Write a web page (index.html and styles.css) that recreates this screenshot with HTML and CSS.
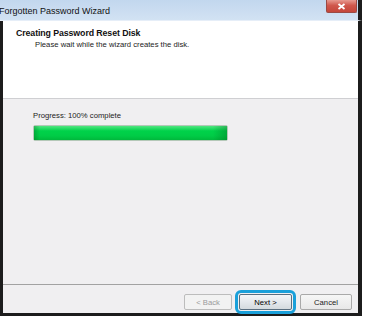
FILE: index.html
```html
<!DOCTYPE html>
<html>
<head>
<meta charset="utf-8">
<link rel="stylesheet" href="styles.css">
</head>
<body>
<div class="window">
  <div class="titlebar">
    <span class="title">Forgotten Password Wizard</span>
    <div class="close"><svg width="9" height="7" viewBox="0 0 9 7"><path d="M1.5 1 L7.5 6 M7.5 1 L1.5 6" stroke="#fff" stroke-width="1.8"/></svg></div>
  </div>
  <div class="frame">
    <div class="header">
      <div class="h-title">Creating Password Reset Disk</div>
      <div class="h-sub">Please wait while the wizard creates the disk.</div>
    </div>
    <div class="main">
      <div class="progress-label">Progress: 100% complete</div>
      <div class="bar"><div class="fill" style="width:100%"></div></div>
    </div>
    <div class="footer">
      <button class="btn disabled">&lt; Back</button>
      <button class="btn primary">Next &gt;</button>
      <button class="btn cancel">Cancel</button>
    </div>
  </div>
</div>
</body>
</html>
```
FILE: styles.css
```css
html, body {
  margin: 0;
  padding: 0;
  background: #ffffff;
}
body {
  width: 365px;
  height: 318px;
  overflow: hidden;
  font-family: "Liberation Sans", Arial, sans-serif;
}
.window {
  width: 362px;
  display: flex;
  flex-direction: column;
}
.titlebar {
  height: 21px;
  box-sizing: border-box;
  background: linear-gradient(#c2d7ee, #d2e2f3);
  border-right: 4px solid #1c1c1c;
  border-bottom: 1px solid #e6eef8;
  display: flex;
  align-items: center;
  position: relative;
}
.title {
  font-size: 9px;
  color: #111;
  margin-left: -1px;
  margin-top: 1px;
}
.close {
  position: absolute;
  right: 1px;
  top: 0;
  width: 31px;
  height: 13px;
  background: linear-gradient(#e79a90, #d0584c 45%, #c4463a);
  border: 1px solid #9a4a44;
  border-top: none;
  border-radius: 0 0 2px 2px;
  box-sizing: border-box;
  display: flex;
  align-items: center;
  justify-content: center;
}
.frame {
  height: 295px;
  box-sizing: border-box;
  border-left: 3px solid #1c1c1c;
  border-right: 4px solid #1c1c1c;
  border-bottom: 3px solid #1c1c1c;
  display: flex;
  flex-direction: column;
  background: #f0eff1;
}
.header {
  height: 78px;
  box-sizing: border-box;
  background: #ffffff;
  border-bottom: 1px solid #cfcfd2;
  padding: 7px 0 0 13px;
}
.h-title {
  font-size: 8.8px;
  font-weight: bold;
  color: #111;
  letter-spacing: -0.1px;
}
.h-sub {
  font-size: 7.7px;
  color: #222;
  margin: 2px 0 0 19px;
}
.main {
  flex: 1;
  padding: 12px 0 0 30px;
}
.progress-label {
  font-size: 7.7px;
  color: #222;
}
.bar {
  width: 195px;
  height: 16px;
  margin-top: 5px;
  box-sizing: border-box;
  border: 1px solid #b4c8b8;
  background: #e8e8e8;
  border-radius: 2px;
}
.fill {
  height: 100%;
  background:
    linear-gradient(to right, rgba(0,100,30,0.35), rgba(0,0,0,0) 6px, rgba(0,0,0,0) calc(100% - 14px), rgba(0,100,30,0.35)),
    linear-gradient(#50e680, #00d24a 35%, #00cc46 70%, #00b83c);
}
.footer {
  height: 29px;
  box-sizing: border-box;
  border-top: 1px solid #a2a2a2;
  display: flex;
  justify-content: flex-end;
  align-items: flex-start;
  padding: 9px 6px 0 0;
  gap: 6px;
}
.btn {
  width: 48px;
  height: 16px;
  box-sizing: border-box;
  border: 1px solid #a9a9a9;
  border-radius: 2px;
  background: linear-gradient(#f6f6f6, #e8e8e8);
  font-family: "Liberation Sans", Arial, sans-serif;
  font-size: 7.7px;
  color: #222;
  padding: 0;
  margin: 0;
}
.btn.disabled {
  color: #9a9a9a;
  background: #f2f2f2;
  border-color: #bcbcbc;
}
.btn.primary {
  width: 53px;
  color: #000;
  border-color: #5a6f80;
  background: linear-gradient(#f4f6f8, #e4e8ec 50%, #d4dade);
  outline: 3px solid #1aa0da;
  outline-offset: 1px;
  margin-right: 2px;
  margin-left: 1px;
}
.btn.cancel {
  width: 52px;
}
```
